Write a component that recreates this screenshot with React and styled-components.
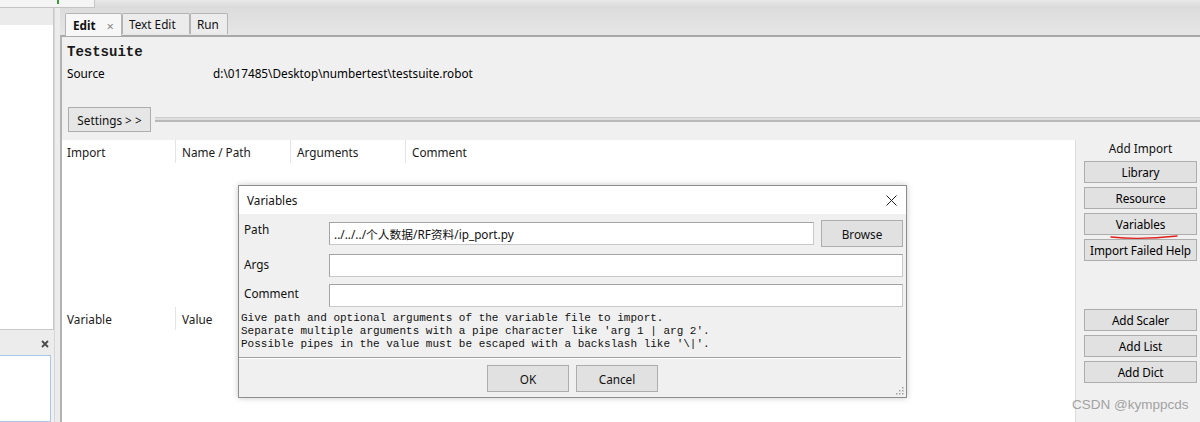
import React from "react";
import styled, { createGlobalStyle } from "styled-components";

const ui = `"Noto Sans", "Noto Sans CJK SC", sans-serif`;
const mono = `"Liberation Mono", "DejaVu Sans Mono", monospace`;

const Global = createGlobalStyle`
  html, body { margin: 0; padding: 0; background: #f0f0f0; overflow: hidden; }
  * { box-sizing: border-box; }
`;

const Screen = styled.div`
  position: relative;
  width: 1200px;
  height: 422px;
  overflow: hidden;
  display: flex;
  flex-direction: column;
  background: #f0f0f0;
  font-family: ${ui};
  font-size: 11.75px;
  color: #000;
`;

const TopBar = styled.div`
  height: 8px;
  display: flex;
  flex-shrink: 0;
`;

const TopBarLeft = styled.div`
  position: relative;
  width: 95px;
  background: #f4f4f4;
  border-bottom: 1px solid #c4c4c4;
  border-right: 1px solid #c4c4c4;
`;

const GreenMark = styled.span`
  position: absolute;
  left: 57px;
  top: 0;
  width: 2px;
  height: 4px;
  background: #3c9a3c;
`;

const TopBarRest = styled.div`
  flex: 1;
  background: linear-gradient(#e8e8e8, #d9d9d9);
`;

const Body = styled.div`
  flex: 1;
  display: flex;
  min-height: 0;
`;

const LeftPane = styled.div`
  width: 54px;
  display: flex;
  flex-direction: column;
  flex-shrink: 0;
`;

const TreeHeader = styled.div`
  height: 17px;
  background: #ebebeb;
  border-right: 1px solid #c9c9c9;
`;

const TreeArea = styled.div`
  height: 305px;
  background: #fff;
  border-right: 1px solid #c9c9c9;
  border-bottom: 1px solid #c9c9c9;
`;

const PanelHeader = styled.div`
  height: 25px;
  background: #ececec;
  display: flex;
  align-items: center;
  justify-content: flex-end;
  padding-right: 5px;
  padding-top: 2px;
`;

const PanelBox = styled.div`
  flex: 1;
  width: 51px;
  background: #fff;
  border: 1px solid #a9c7e4;
  border-left: none;
`;

const Splitter = styled.div`
  width: 6px;
  flex-shrink: 0;
  background: #ececec;
  border-left: 1px solid #d6d6d6;
`;

const MainArea = styled.div`
  flex: 1;
  display: flex;
  flex-direction: column;
  min-width: 0;
`;

const TabStrip = styled.div`
  height: 27px;
  flex-shrink: 0;
  display: flex;
  align-items: flex-end;
  padding-left: 5px;
  background: linear-gradient(#dcdcdc, #e6e6e6);
`;

const Tab = styled.div`
  height: ${(p) => (p.$active ? 23 : 21)}px;
  margin-bottom: ${(p) => (p.$active ? -1 : 1)}px;
  padding: 0 ${(p) => p.$pad}px 0 ${(p) => p.$padL}px;
  width: ${(p) => p.$w}px;
  display: flex;
  align-items: center;
  border: 1px solid #b4b4b4;
  border-bottom: none;
  border-radius: 2px 2px 0 0;
  background: ${(p) => (p.$active ? "#f7f7f7" : "#ececec")};
  font-weight: ${(p) => (p.$active ? 700 : 400)};
  color: #111;
  position: relative;
  z-index: ${(p) => (p.$active ? 2 : 1)};
`;

const TabClose = styled.span`
  margin-left: auto;
  color: #8a8a8a;
  font-weight: 400;
  font-size: 13px;
  line-height: 1;
  padding-top: 3px;
`;

const EditorPanel = styled.div`
  flex: 1;
  display: flex;
  flex-direction: column;
  min-height: 0;
  border-top: 2px solid #a8a8a8;
  border-left: 2px solid #b3b3b3;
  background: #f0f0f0;
`;

const SuiteTitle = styled.div`
  margin: 7px 0 0 5px;
  font-family: ${mono};
  font-weight: 700;
  font-size: 14px;
  line-height: 16px;
  color: #1a1a1a;
`;

const SourceRow = styled.div`
  margin: 5px 0 0 5px;
  display: flex;
  line-height: 16px;
`;

const SourceLabel = styled.span`
  width: 146px;
`;

const SettingsRow = styled.div`
  margin-top: 26px;
  display: flex;
  align-items: center;
  padding-left: 6px;
`;

const SettingsButton = styled.div`
  width: 83px;
  height: 25px;
  display: flex;
  align-items: center;
  justify-content: center;
  background: #e6e6e6;
  border: 1px solid #adadad;
  color: #111;
`;

const Groove = styled.div`
  flex: 1;
  margin-left: 4px;
  height: 5px;
  background: #dedede;
  border-top: 1px solid #cdcdcd;
  border-bottom: 2px solid #b9b9b9;
`;

const Workspace = styled.div`
  margin-top: 8px;
  flex: 1;
  display: flex;
  min-height: 0;
`;

const TablesArea = styled.div`
  width: 1013px;
  background: #fff;
  display: flex;
  flex-direction: column;
`;

const Table = styled.div`
  height: ${(p) => p.$h}px;
  flex-shrink: 0;
`;

const HeaderRow = styled.div`
  display: grid;
  grid-template-columns: 114px 115px 115px 115px;
  height: 23px;
`;

const HeaderCell = styled.div`
  display: flex;
  align-items: center;
  padding-left: ${(p) => (p.$first ? 5 : 6)}px;
  border-right: ${(p) => (p.$sep ? "1px solid #e4e4e4" : "none")};
  color: #1a1a1a;
`;

const SidePanel = styled.div`
  position: relative;
  flex: 1;
  display: flex;
  flex-direction: column;
  align-items: flex-start;
  padding-left: 8px;
  border-left: 1px solid #dedede;
`;

const SideLabel = styled.div`
  width: 113px;
  text-align: center;
  line-height: 16px;
  color: #111;
`;

const ButtonStack = styled.div`
  display: flex;
  flex-direction: column;
  gap: 4px;
  margin-top: ${(p) => p.$mt}px;
`;

const SideButton = styled.div`
  width: 113px;
  height: 22px;
  display: flex;
  align-items: center;
  justify-content: center;
  background: #e1e1e1;
  border: 1px solid #adadad;
  color: #000;
  white-space: nowrap;
  letter-spacing: -0.1px;
`;

const RedMark = styled.svg`
  position: absolute;
  left: 34px;
  top: 94px;
`;

/* Dialog */
const Dialog = styled.div`
  position: absolute;
  left: 238px;
  top: 185px;
  width: 669px;
  height: 213px;
  display: flex;
  flex-direction: column;
  background: #f0f0f0;
  border: 1px solid #8d8d8d;
  box-shadow: 0 0 6px rgba(0, 0, 0, 0.22);
  z-index: 10;
`;

const TitleBar = styled.div`
  height: 28px;
  flex-shrink: 0;
  background: #fff;
  display: flex;
  align-items: center;
  padding: 0 9px 0 8px;
  color: #111;
`;

const CloseX = styled.svg`
  margin-left: auto;
`;

const DialogBody = styled.div`
  flex: 1;
  display: flex;
  flex-direction: column;
  padding: 6px 3px 0 0;
`;

const FormGrid = styled.div`
  display: grid;
  grid-template-columns: 90px 1fr;
  row-gap: 7px;
`;

const FieldLabel = styled.div`
  padding: ${(p) => p.$pt}px 0 0 5px;
  line-height: 16px;
  color: #111;
`;

const FieldRow = styled.div`
  display: flex;
  align-items: center;
  gap: 7px;
`;

const Input = styled.div`
  flex: 1;
  height: 23px;
  background: #fff;
  border: 1px solid #a3a3a3;
  border-bottom-color: #c9c9c9;
  border-right-color: #c9c9c9;
  display: flex;
  align-items: center;
  padding-left: 4px;
  color: #111;
  white-space: nowrap;
`;

const DlgButton = styled.div`
  width: ${(p) => p.$w}px;
  height: 27px;
  display: flex;
  align-items: center;
  justify-content: center;
  background: #e1e1e1;
  border: 1px solid #adadad;
  color: #111;
  flex-shrink: 0;
`;

const HelpText = styled.pre`
  margin: 5px 0 0 2px;
  font-family: ${mono};
  font-size: 11px;
  line-height: 13px;
  color: #111;
`;

const Separator = styled.div`
  margin: 6px 2px 0 0;
  height: 2px;
  border-top: 1px solid #a0a0a0;
  border-bottom: 1px solid #fff;
`;

const DialogButtons = styled.div`
  margin-top: 6px;
  display: flex;
  justify-content: center;
  gap: 7px;
  padding-left: 3px;
`;

const Grip = styled.svg`
  position: absolute;
  right: 2px;
  bottom: 2px;
`;

const Watermark = styled.div`
  position: absolute;
  left: 1072px;
  top: 397px;
  font-family: "Liberation Sans", Arial, sans-serif;
  font-size: 13.5px;
  color: #a2a2a2;
  z-index: 20;
`;

const sideImports = ["Library", "Resource", "Variables", "Import Failed Help"];
const sideVars = ["Add Scaler", "Add List", "Add Dict"];

export default function App() {
  return (
    <>
      <Global />
      <Screen>
        <TopBar>
          <TopBarLeft>
            <GreenMark />
          </TopBarLeft>
          <TopBarRest />
        </TopBar>
        <Body>
          <LeftPane>
            <TreeHeader />
            <TreeArea />
            <PanelHeader>
              <svg width="8" height="8" viewBox="0 0 8 8">
                <path d="M1 1L7 7M7 1L1 7" stroke="#4a4a4a" strokeWidth="1.8" />
              </svg>
            </PanelHeader>
            <PanelBox />
          </LeftPane>
          <Splitter />
          <MainArea>
            <TabStrip>
              <Tab $active $w={57} $padL={7} $pad={7}>
                Edit
                <TabClose>×</TabClose>
              </Tab>
              <Tab $w={68} $padL={6} $pad={4}>Text Edit</Tab>
              <Tab $w={38} $padL={6} $pad={4}>Run</Tab>
            </TabStrip>
            <EditorPanel>
              <SuiteTitle>Testsuite</SuiteTitle>
              <SourceRow>
                <SourceLabel>Source</SourceLabel>
                <span>d:\017485\Desktop\numbertest\testsuite.robot</span>
              </SourceRow>
              <SettingsRow>
                <SettingsButton>Settings &gt; &gt;</SettingsButton>
                <Groove />
              </SettingsRow>
              <Workspace>
                <TablesArea>
                  <Table $h={167}>
                    <HeaderRow>
                      <HeaderCell $first $sep>Import</HeaderCell>
                      <HeaderCell $sep>Name / Path</HeaderCell>
                      <HeaderCell $sep>Arguments</HeaderCell>
                      <HeaderCell>Comment</HeaderCell>
                    </HeaderRow>
                  </Table>
                  <Table $h={60}>
                    <HeaderRow>
                      <HeaderCell $first $sep>Variable</HeaderCell>
                      <HeaderCell>Value</HeaderCell>
                    </HeaderRow>
                  </Table>
                </TablesArea>
                <SidePanel>
                  <SideLabel>Add Import</SideLabel>
                  <ButtonStack $mt={5}>
                    {sideImports.map((t) => (
                      <SideButton key={t}>{t}</SideButton>
                    ))}
                  </ButtonStack>
                  <ButtonStack $mt={48}>
                    {sideVars.map((t) => (
                      <SideButton key={t}>{t}</SideButton>
                    ))}
                  </ButtonStack>
                  <RedMark width="68" height="6" viewBox="0 0 68 6">
                    <path
                      d="M1 3 C 20 5, 40 5, 67 2"
                      stroke="#e0201c"
                      strokeWidth="1.4"
                      fill="none"
                      strokeLinecap="round"
                    />
                  </RedMark>
                </SidePanel>
              </Workspace>
            </EditorPanel>
          </MainArea>
        </Body>

        <Dialog>
          <TitleBar>
            Variables
            <CloseX width="11" height="11" viewBox="0 0 11 11">
              <path d="M0.5 0.5L10.5 10.5M10.5 0.5L0.5 10.5" stroke="#222" strokeWidth="1" />
            </CloseX>
          </TitleBar>
          <DialogBody>
            <FormGrid>
              <FieldLabel $pt={1}>Path</FieldLabel>
              <FieldRow>
                <Input>../../../个人数据/RF资料/ip_port.py</Input>
                <DlgButton $w={82}>Browse</DlgButton>
              </FieldRow>
              <FieldLabel $pt={2}>Args</FieldLabel>
              <FieldRow>
                <Input />
              </FieldRow>
              <FieldLabel $pt={1}>Comment</FieldLabel>
              <FieldRow>
                <Input />
              </FieldRow>
            </FormGrid>
            <HelpText>
              {"Give path and optional arguments of the variable file to import.\n" +
                "Separate multiple arguments with a pipe character like 'arg 1 | arg 2'.\n" +
                "Possible pipes in the value must be escaped with a backslash like '\\|'."}
            </HelpText>
            <Separator />
            <DialogButtons>
              <DlgButton $w={82}>OK</DlgButton>
              <DlgButton $w={82}>Cancel</DlgButton>
            </DialogButtons>
          </DialogBody>
          <Grip width="10" height="10" viewBox="0 0 10 10">
            <g fill="#a0a0a0">
              <rect x="8" y="2" width="1.5" height="1.5" />
              <rect x="5" y="5" width="1.5" height="1.5" />
              <rect x="8" y="5" width="1.5" height="1.5" />
              <rect x="2" y="8" width="1.5" height="1.5" />
              <rect x="5" y="8" width="1.5" height="1.5" />
              <rect x="8" y="8" width="1.5" height="1.5" />
            </g>
          </Grip>
        </Dialog>
        <Watermark>CSDN @kymppcds</Watermark>
      </Screen>
    </>
  );
}
